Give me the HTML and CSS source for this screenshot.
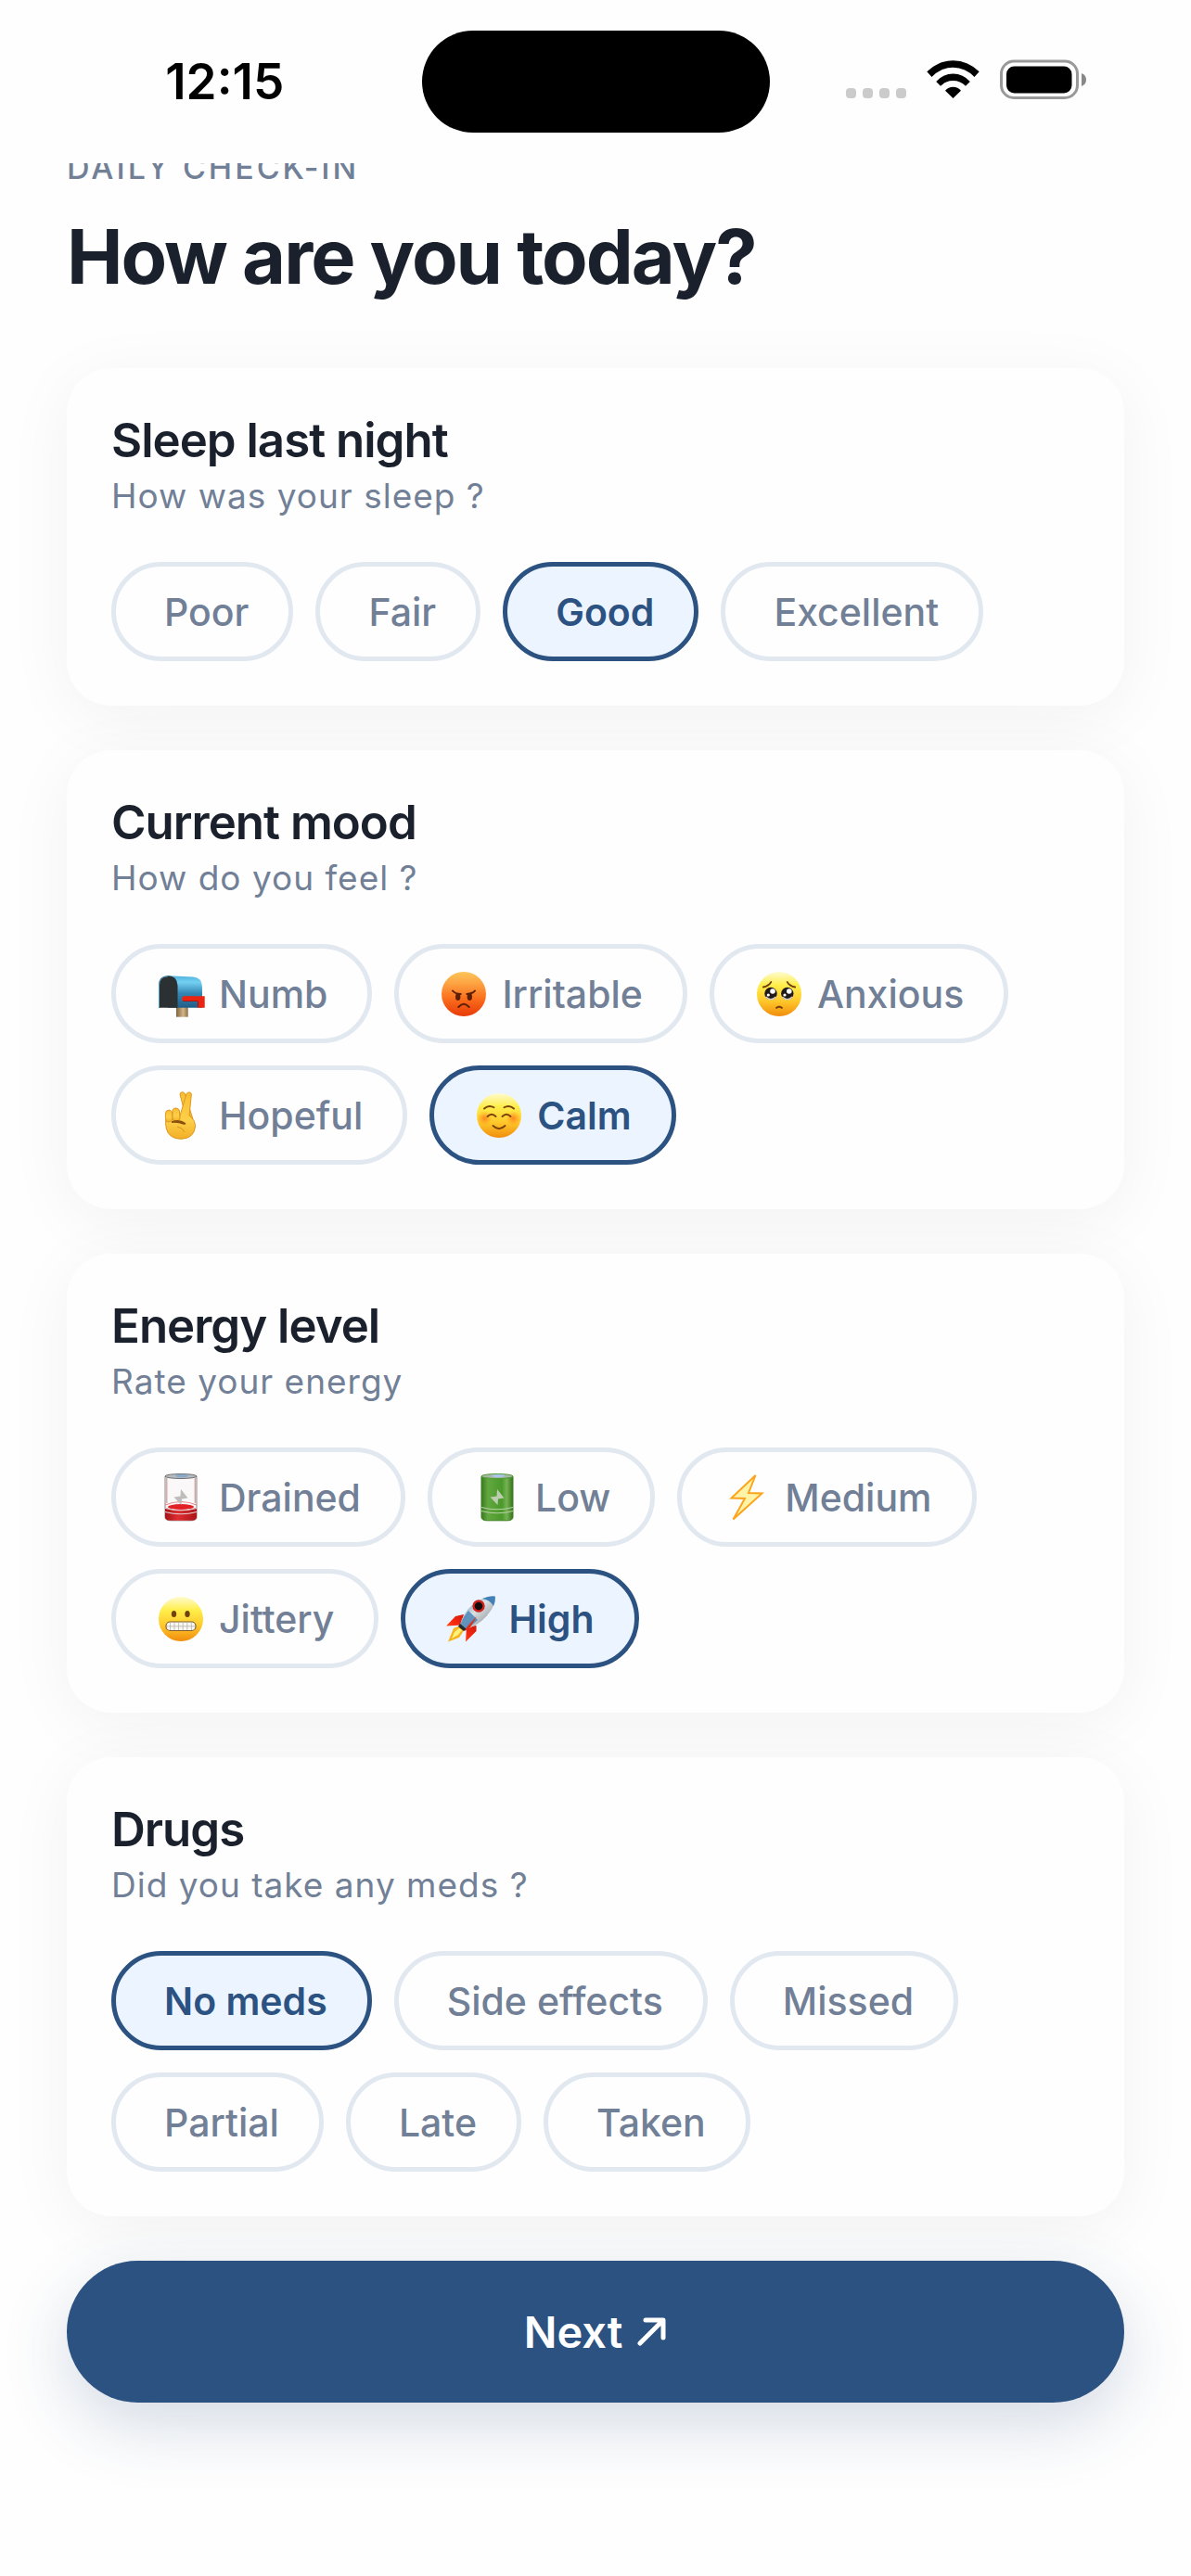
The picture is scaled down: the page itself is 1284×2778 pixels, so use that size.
FILE: index.html
```html
<!DOCTYPE html>
<html lang="en">
<head>
<meta charset="utf-8">
<meta name="viewport" content="width=device-width, initial-scale=1">
<title>Daily check-in</title>
<link rel="stylesheet" href="styles.css">
</head>
<body>
<svg class="defs" aria-hidden="true">
  <defs>
    <linearGradient id="face" x1="0" y1="0" x2="0" y2="1"><stop offset="0" stop-color="#fffbd0"/><stop offset=".3" stop-color="#ffee4a"/><stop offset=".65" stop-color="#ffc92b"/><stop offset="1" stop-color="#f08c0c"/></linearGradient>
    <linearGradient id="anger" x1="0" y1="0" x2="0" y2="1"><stop offset="0" stop-color="#fdc45a"/><stop offset=".25" stop-color="#fda544"/><stop offset=".6" stop-color="#fb6f1c"/><stop offset="1" stop-color="#e83a08"/></linearGradient>
    <linearGradient id="mail" x1="0" y1="0" x2="0" y2="1"><stop offset="0" stop-color="#4fb2dc"/><stop offset=".2" stop-color="#74d0f2"/><stop offset=".55" stop-color="#3487b4"/><stop offset="1" stop-color="#205d88"/></linearGradient>
    <linearGradient id="post" x1="0" y1="0" x2="1" y2="0"><stop offset="0" stop-color="#7d6545"/><stop offset=".6" stop-color="#d3b586"/><stop offset="1" stop-color="#8a7048"/></linearGradient>
    <linearGradient id="hand" x1="0" y1="0" x2="0" y2="1"><stop offset="0" stop-color="#f9bd31"/><stop offset=".6" stop-color="#fdd04a"/><stop offset="1" stop-color="#f2ae25"/></linearGradient>
    <linearGradient id="cell" x1="0" y1="0" x2="1" y2="0"><stop offset="0" stop-color="#39791f"/><stop offset=".2" stop-color="#62a840"/><stop offset=".65" stop-color="#4b992b"/><stop offset=".8" stop-color="#75b352"/><stop offset="1" stop-color="#35731d"/></linearGradient>
    <linearGradient id="charge" x1="0" y1="0" x2="1" y2="0"><stop offset="0" stop-color="#a31317"/><stop offset=".4" stop-color="#e02e32"/><stop offset="1" stop-color="#ac1418"/></linearGradient>
    <linearGradient id="hull" x1="0" y1="0" x2="1" y2="1"><stop offset="0" stop-color="#3c82bd"/><stop offset=".45" stop-color="#d9dfe2"/><stop offset=".75" stop-color="#a2a8ab"/><stop offset="1" stop-color="#555d63"/></linearGradient>
    <linearGradient id="fin" x1="1" y1="0" x2="0" y2="1"><stop offset="0" stop-color="#b80e08"/><stop offset=".55" stop-color="#fa2b10"/><stop offset="1" stop-color="#ff9c28"/></linearGradient>
    <radialGradient id="blush"><stop offset="0" stop-color="#ff6a1a" stop-opacity=".75"/><stop offset="1" stop-color="#ff8a1a" stop-opacity="0"/></radialGradient>
  </defs>
</svg>

<div class="status-bar">
  <time class="clock">12:15</time>
  <div class="island"></div>
  <div class="indicators">
    <svg width="65" height="48" viewBox="0 0 65 48" fill="#cbcbcb" role="img" aria-label="No signal"><rect y="31" width="11" height="11" rx="4"/><rect x="18" y="31" width="11" height="11" rx="4"/><rect x="36" y="31" width="11" height="11" rx="4"/><rect x="54" y="31" width="11" height="11" rx="4"/></svg>
    <svg width="57" height="48" viewBox="0 0 57 48" role="img" aria-label="Wi-Fi"><path d="M.3 13.3A39 39 0 0 1 56.7 13.3L51.5 19A31 31 0 0 0 5.5 19ZM10.2 24A24 24 0 0 1 46.8 24L42 28.8A18.8 18.8 0 0 0 15 28.8ZM20 33.7A11 11 0 0 1 37 33.7L28.5 42Z"/></svg>
    <svg width="93" height="48" viewBox="0 0 93 48" role="img" aria-label="Battery full"><rect x="1.5" y="2" width="82" height="39.500" rx="13.500" fill="none" stroke="#999" stroke-width="3"/><rect x="7" y="7.500" width="70.500" height="29" rx="8.500"/><path d="M88 15Q93 17 93 22T88 29Z" fill="#888"/></svg>
  </div>
</div>

<main class="page">
  <header class="intro">
    <p class="eyebrow">DAILY CHECK-IN</p>
    <h1 class="title">How are you today?</h1>
  </header>

  <form class="form">
    <section class="card" role="radiogroup" aria-labelledby="sleep-title">
      <h2 class="card-title" id="sleep-title">Sleep last night</h2>
      <p class="card-hint">How was your sleep ?</p>
      <div class="chips">
        <label class="chip"><input type="radio" name="sleep">Poor</label>
        <label class="chip"><input type="radio" name="sleep">Fair</label>
        <label class="chip"><input type="radio" name="sleep" checked>Good</label>
        <label class="chip"><input type="radio" name="sleep">Excellent</label>
      </div>
    </section>

    <section class="card" role="radiogroup" aria-labelledby="mood-title">
      <h2 class="card-title" id="mood-title">Current mood</h2>
      <p class="card-hint">How do you feel ?</p>
      <div class="chips">
        <label class="chip chip-emoji"><input type="radio" name="mood">
          <svg class="emoji" viewBox="0 0 54 54" aria-hidden="true"><path d="M22 40H34.700V51.700H22Z" fill="url(#post)"/><path d="M13 7.300L40 8.500Q50 9 50 20V41.700H13Z" fill="url(#mail)"/><path d="M3 41.700V18Q3 7.300 13 7.300T23.500 18V41.700Z" fill="#2b3033"/><path d="M3.500 41.500V18Q3.500 7.800 13 7.800" fill="none" stroke="#4aa6cf" stroke-width="1"/><path d="M29.500 29.300H52.700V41.700H45.300V35H29.500Q27 32 29.500 29.300Z" fill="#ea2410"/><path d="M29 34.500H45.500V41" fill="none" stroke="#b01309"/></svg>
          Numb</label>
        <label class="chip chip-emoji"><input type="radio" name="mood">
          <svg class="emoji" viewBox="0 0 54 54" aria-hidden="true"><circle cx="27" cy="27" r="24" fill="url(#anger)"/><g fill="#5f1f04"><ellipse cx="20.700" cy="30" rx="2.700" ry="4"/><ellipse cx="33.300" cy="30" rx="2.700" ry="4"/></g><path d="M15 23.500Q17.500 26.800 23.700 27M39 23.500Q36.500 26.800 30.300 27M21.300 41Q27 34.500 32.700 41" fill="none" stroke="#5f1f04" stroke-width="2" stroke-linecap="round"/></svg>
          Irritable</label>
        <label class="chip chip-emoji"><input type="radio" name="mood">
          <svg class="emoji" viewBox="0 0 54 54" aria-hidden="true"><circle cx="27" cy="27" r="24" fill="url(#face)"/><circle cx="18" cy="26.500" r="6.700" fill="#201b1a"/><circle cx="35.800" cy="26.500" r="6.700" fill="#201b1a"/><g fill="#fff"><circle cx="20" cy="24" r="2.800"/><circle cx="37.800" cy="24" r="2.800"/><circle cx="15.300" cy="28" r="1.600"/><circle cx="33" cy="28" r="1.600"/></g><path d="M12.500 30Q18 35.500 23.500 30M30.300 30Q35.800 35.500 41.300 30" fill="none" stroke="#d8d0c4" stroke-width="1.600"/><path d="M9.800 19.500Q15.500 18.500 18.300 14M44.200 19.500Q38.500 18.500 35.700 14M24 42Q27 39.500 30 42" fill="none" stroke="#73400c" stroke-width="1.800" stroke-linecap="round"/></svg>
          Anxious</label>
        <label class="chip chip-emoji"><input type="radio" name="mood">
          <svg class="emoji" viewBox="0 0 54 54" aria-hidden="true"><g fill="url(#hand)" stroke="#dc9721" stroke-width="1"><path d="M32.500 29L26 4Q26 1.800 29 1.800Q31 2 31.500 4L40 31Z"/><path d="M25.500 29L33 3.500Q34.500 1.500 36.500 2Q38.800 2.800 38.300 5L36 27Q42.700 32 42.500 39Q41 52 27 52.300Q14 52 11.300 41Q10 35 11 30Z"/><path d="M11 33Q9.500 25 11.500 22Q15 19.500 17.500 23L18 31Q15 35.500 11 33Z"/><path d="M18 31V21Q19 18.500 22 19Q25 19.500 25.500 22L26 31Q22 35 18 31Z"/></g><path d="M17 33Q26 30 32 35Q33 37 30 36.800Q23 34 17 35" fill="#8a500b"/><path d="M23 39Q29 40 31 45" fill="none" stroke="#d9921c"/></svg>
          Hopeful</label>
        <label class="chip chip-emoji"><input type="radio" name="mood" checked>
          <svg class="emoji" viewBox="0 0 54 54" aria-hidden="true"><circle cx="27" cy="27" r="24" fill="url(#face)"/><circle cx="11.500" cy="30" r="8" fill="url(#blush)"/><circle cx="42.500" cy="30" r="8" fill="url(#blush)"/><path d="M11 19.500Q16 15 21.500 18.300M43 19.500Q38 15 32.500 18.300M14.500 28Q19 23.500 23.500 28M30.500 28Q35 23.500 39.500 28M20.500 38Q27 44.500 33.500 38" fill="none" stroke="#7a430b" stroke-width="1.900" stroke-linecap="round"/></svg>
          Calm</label>
      </div>
    </section>

    <section class="card" role="radiogroup" aria-labelledby="energy-title">
      <h2 class="card-title" id="energy-title">Energy level</h2>
      <p class="card-hint">Rate your energy</p>
      <div class="chips">
        <label class="chip chip-emoji"><input type="radio" name="energy">
          <svg class="emoji" viewBox="0 0 54 54" aria-hidden="true"><path d="M10 4V48Q10 51.800 16 51.800H38Q44 51.800 44 48V4Z" fill="#faf8f8" stroke="#8d8585"/><path d="M10 38V48Q10 51.800 16 51.800H38Q44 51.800 44 48V38Q27 43 10 38Z" fill="url(#charge)"/><ellipse cx="27" cy="37" rx="14" ry="3" fill="#e12126"/><path d="M10 35Q27 28 44 35" fill="none" stroke="#e87f82" stroke-width="1.200"/><path d="M10 38.500Q27 43 44 38.500M10 42.500Q27 47 44 42.500" fill="none" stroke="#e3d3d3" stroke-width="1.200"/><path d="M11.800 6V33M42.300 6V33" stroke="#cf9c9c" stroke-width="1.200"/><ellipse cx="27" cy="4" rx="17" ry="2.500" fill="#b9bcbf" stroke="#6c7073"/><ellipse cx="28" cy="3.500" rx="7" ry="1.800" fill="#89a9c8"/><path d="M27 18L34.500 27.500L28 28.500L27.500 35L19.500 26.500L26.500 25.500Z" fill="#bdbdbb"/></svg>
          Drained</label>
        <label class="chip chip-emoji"><input type="radio" name="energy">
          <svg class="emoji" viewBox="0 0 54 54" aria-hidden="true"><path d="M10 4V48Q10 51.800 16 51.800H38Q44 51.800 44 48V4Z" fill="url(#cell)" stroke="#3f7f24"/><path d="M10 37.500Q27 42 44 37.500M10 41.500Q27 46 44 41.500" fill="none" stroke="#b6d1a3" stroke-width="1.200"/><ellipse cx="27" cy="4" rx="17" ry="2.500" fill="#a9b8a6" stroke="#4c9a2d"/><ellipse cx="28" cy="3.500" rx="7" ry="1.800" fill="#a9c4e4"/><path d="M27 18L34.500 27.500L28 28.500L27.500 35L19.500 26.500L26.500 25.500Z" fill="#bccdb0"/></svg>
          Low</label>
        <label class="chip chip-emoji"><input type="radio" name="energy">
          <svg class="emoji" viewBox="0 0 54 54" aria-hidden="true"><path d="M36.500 3L10.500 27.500L25 28L12.500 50.500L43.500 22.500L29 22Z" fill="#fff3a8" stroke="#fba41c" stroke-width="2" stroke-linejoin="miter"/></svg>
          Medium</label>
        <label class="chip chip-emoji"><input type="radio" name="energy">
          <svg class="emoji" viewBox="0 0 54 54" aria-hidden="true"><circle cx="27" cy="27" r="24" fill="url(#face)"/><ellipse cx="19.500" cy="21.500" rx="2.700" ry="3.600" fill="#71420c"/><ellipse cx="34" cy="21.500" rx="2.700" ry="3.600" fill="#71420c"/><rect x="11" y="30" width="32" height="9.500" rx="4.500" fill="#f8f8f5" stroke="#805c2d" stroke-width="1.200"/><path d="M11.500 34.800H42.500M15.500 30.500V39M20 30.500V39M24.600 30.500V39M29.200 30.500V39M33.800 30.500V39M38.400 30.500V39" stroke="#b7b2aa" stroke-width=".8"/></svg>
          Jittery</label>
        <label class="chip chip-emoji"><input type="radio" name="energy" checked>
          <svg class="emoji" viewBox="0 0 54 54" aria-hidden="true"><path d="M20 22L11 24L1 34.500L17 33.500ZM33.500 34V40L22 51.500L23 36Z" fill="url(#fin)"/><path d="M16 34L9 37L3 51.500L15 47L21 38Z" fill="#f6b51f"/><path d="M15 37L10 41L7 48L14 44L18 39Z" fill="#fff17a"/><path d="M16 33Q21 14 40 5Q48 1.500 53.700 2.500Q54.500 10 49 18Q39 33 22 38Z" fill="url(#hull)"/><path d="M40 5Q48 1.500 53.700 2.500Q54.500 7 52 13Q48 6 40 5Z" fill="#4280b8"/><path d="M16 33Q19 25 25 18L35 28Q29 34 22 38Z" fill="#3b7bb2" fill-opacity=".75"/><path d="M16 32L23 38L20 40L14 35Z" fill="#24292d"/><circle cx="36" cy="13" r="5.500" fill="#160b0b" stroke="#cc241d" stroke-width="2.400"/><path d="M34 24L23 36L21 40L27 36Z" fill="#e52a12"/></svg>
          High</label>
      </div>
    </section>

    <section class="card" role="radiogroup" aria-labelledby="drugs-title">
      <h2 class="card-title" id="drugs-title">Drugs</h2>
      <p class="card-hint">Did you take any meds ?</p>
      <div class="chips">
        <label class="chip"><input type="radio" name="drugs" checked>No meds</label>
        <label class="chip"><input type="radio" name="drugs">Side effects</label>
        <label class="chip"><input type="radio" name="drugs">Missed</label>
        <label class="chip"><input type="radio" name="drugs">Partial</label>
        <label class="chip"><input type="radio" name="drugs">Late</label>
        <label class="chip"><input type="radio" name="drugs">Taken</label>
      </div>
    </section>

    <button class="next" type="button">Next
      <svg width="32" height="32" viewBox="0 0 32 32" aria-hidden="true"><path d="M3 28L27.500 3.500M9 3H28V22" fill="none" stroke="#fff" stroke-width="5" stroke-linecap="round" stroke-linejoin="round"/></svg>
    </button>
  </form>
</main>
</body>
</html>
```
FILE: styles.css
```css
:root {
  --ink: #1a202c;
  --muted: #718096;
  --line: #e2e8f0;
  --brand: #2c5282;
  --brand-tint: #ebf4ff;
  --surface: #fefefe;
}

* {
  box-sizing: border-box;
}

body {
  margin: 0;
  min-height: 100vh;
  background: var(--surface);
  color: var(--ink);
  font-family: Inter, "Liberation Sans", sans-serif;
}

h1,
h2,
p {
  margin: 0;
}

.defs {
  position: absolute;
  width: 0;
  height: 0;
}

/* Status bar: the page scrolls underneath it */
.status-bar {
  position: sticky;
  top: 0;
  z-index: 1;
  display: grid;
  grid-template-columns: 1fr 375px 1fr;
  align-items: center;
  padding: 33px 0;
  background: var(--surface);
}

.clock {
  padding-left: 30px;
  color: #000;
  font-size: 53px;
  font-weight: 600;
  line-height: 60px;
  text-align: center;
}

.island {
  height: 110px;
  border-radius: 55px;
  background: #000;
}

.indicators {
  display: flex;
  justify-content: center;
  gap: 22px;
  padding-right: 30px;
}

.page {
  padding: 0 72px 72px;
}

.intro {
  display: grid;
  gap: 24px;
  margin-top: -17px;
  margin-bottom: 70px;
}

.eyebrow {
  color: var(--muted);
  font-size: 34px;
  font-weight: 500;
  line-height: 44px;
  letter-spacing: 3px;
}

.title {
  font-size: 81px;
  font-weight: 700;
  line-height: 100px;
  letter-spacing: -2px;
}

.form {
  display: grid;
  gap: 48px;
}

.card {
  padding: 48px;
  border-radius: 48px;
  background: var(--surface);
  box-shadow: 0 12px 72px rgba(0, 0, 0, 0.05);
}

.card-title {
  margin-bottom: 6px;
  font-size: 51px;
  font-weight: 600;
  line-height: 60px;
  letter-spacing: -1px;
}

.card-hint {
  margin-bottom: 48px;
  color: var(--muted);
  font-size: 37px;
  line-height: 47px;
  letter-spacing: 1px;
}

.chips {
  display: flex;
  flex-wrap: wrap;
  gap: 24px;
}

.chip {
  position: relative;
  display: flex;
  align-items: center;
  gap: 14px;
  min-height: 107px;
  padding: 0 43px 0 52px;
  border: 5px solid var(--line);
  border-radius: 54px;
  color: var(--muted);
  font-size: 41px;
  font-weight: 500;
  line-height: 48px;
  cursor: pointer;
}

.chip-emoji {
  padding-left: 43px;
}

.chip:has(input:checked) {
  border-color: var(--brand);
  background: var(--brand-tint);
  color: var(--brand);
  font-weight: 600;
}

.chip input {
  position: absolute;
  inset: 0;
  width: 100%;
  height: 100%;
  margin: 0;
  opacity: 0;
  cursor: pointer;
}

.emoji {
  width: 54px;
  height: 54px;
}

.next {
  display: flex;
  align-items: center;
  justify-content: center;
  gap: 16px;
  min-height: 153px;
  border: 0;
  border-radius: 77px;
  background: var(--brand);
  box-shadow: 0 24px 72px rgba(44, 82, 130, 0.2);
  color: #fff;
  font: 600 47px/56px Inter, "Liberation Sans", sans-serif;
  cursor: pointer;
}
```
